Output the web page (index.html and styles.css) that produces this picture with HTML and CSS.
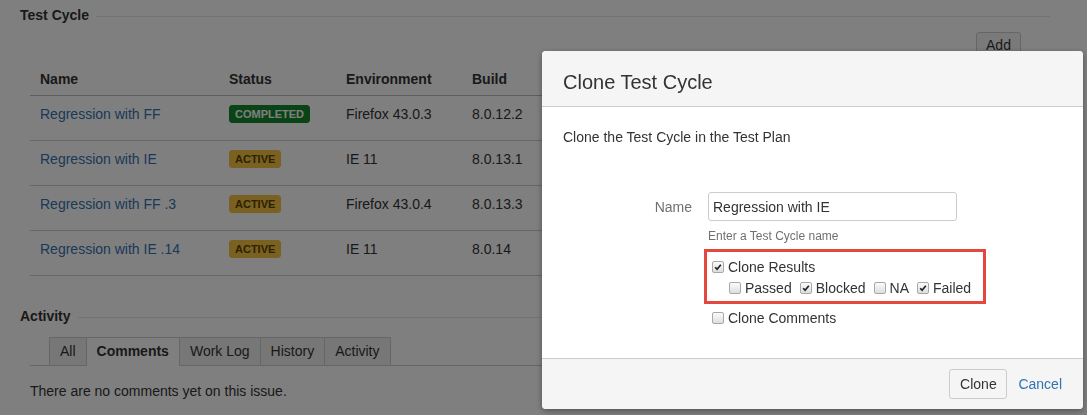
FILE: index.html
```html
<!DOCTYPE html>
<html lang="en">
  <head>
    <meta charset="utf-8" />
    <title>Clone Test Cycle</title>
    <link rel="stylesheet" href="styles.css">
  </head>
  <body>
    <div class="page">
      <div class="section-head">
        <h3>Test Cycle</h3>
        <span class="rule"></span>
      </div>

      <div class="cycles">
        <div class="toolbar">
          <button class="btn">Add</button>
        </div>
        <table class="cycle-table">
          <thead>
            <tr>
              <th class="col-name">Name</th>
              <th class="col-status">Status</th>
              <th class="col-env">Environment</th>
              <th>Build</th>
            </tr>
          </thead>
          <tbody>
            <tr>
              <td><a href="#">Regression with FF</a></td>
              <td><span class="lozenge done">Completed</span></td>
              <td>Firefox 43.0.3</td>
              <td>8.0.12.2</td>
            </tr>
            <tr>
              <td><a href="#">Regression with IE</a></td>
              <td><span class="lozenge active">Active</span></td>
              <td>IE 11</td>
              <td>8.0.13.1</td>
            </tr>
            <tr>
              <td><a href="#">Regression with FF .3</a></td>
              <td><span class="lozenge active">Active</span></td>
              <td>Firefox 43.0.4</td>
              <td>8.0.13.3</td>
            </tr>
            <tr>
              <td><a href="#">Regression with IE .14</a></td>
              <td><span class="lozenge active">Active</span></td>
              <td>IE 11</td>
              <td>8.0.14</td>
            </tr>
          </tbody>
        </table>
      </div>

      <div class="section-head activity-head">
        <h3>Activity</h3>
        <span class="rule"></span>
      </div>

      <div class="activity">
        <ul class="tabs">
          <li class="tab">All</li>
          <li class="tab current">Comments</li>
          <li class="tab">Work Log</li>
          <li class="tab">History</li>
          <li class="tab">Activity</li>
        </ul>
        <p class="empty">There are no comments yet on this issue.</p>
      </div>
    </div>

    <div class="blanket"></div>

    <div class="dialog">
      <div class="dialog-header">
        <h2>Clone Test Cycle</h2>
      </div>
      <div class="dialog-body">
        <p>Clone the Test Cycle in the Test Plan</p>

        <div class="field">
          <label class="field-label" for="cycle-name">Name</label>
          <div class="field-value">
            <input id="cycle-name" class="text" type="text" value="Regression with IE" />
            <div class="hint">Enter a Test Cycle name</div>

            <div class="highlight">
              <label class="check">
                <span class="box on"><svg viewBox="0 0 12 12"><path d="M2.6 6.3 L4.9 8.6 L9.4 3.2" /></svg></span>
                Clone Results
              </label>
              <div class="sub-checks">
                <label class="check">
                  <span class="box"></span>
                  Passed
                </label>
                <label class="check">
                  <span class="box on"><svg viewBox="0 0 12 12"><path d="M2.6 6.3 L4.9 8.6 L9.4 3.2" /></svg></span>
                  Blocked
                </label>
                <label class="check">
                  <span class="box"></span>
                  NA
                </label>
                <label class="check">
                  <span class="box on"><svg viewBox="0 0 12 12"><path d="M2.6 6.3 L4.9 8.6 L9.4 3.2" /></svg></span>
                  Failed
                </label>
              </div>
            </div>

            <label class="check comments">
              <span class="box"></span>
              Clone Comments
            </label>
          </div>
        </div>
      </div>
      <div class="dialog-footer">
        <button class="btn">Clone</button>
        <a href="#" class="cancel">Cancel</a>
      </div>
    </div>
  </body>
</html>
```

FILE: styles.css
```css
/* Global */
body {
  margin: 0;
  font-family: "Liberation Sans", Arial, sans-serif;
  font-size: 14px;
  line-height: 20px;
  color: #333;
  background: #fff;
}

a {
  color: #3572b0;
  text-decoration: none;
}

.btn {
  font-family: inherit;
  font-size: 14px;
  color: #333;
  background: #f5f5f5;
  border: 1px solid #ccc;
  border-radius: 3px;
  padding: 0 10px;
  height: 30px;
}

/* Page behind the dialog */
.page {
  padding: 5px 37px 0 20px;
}

.section-head {
  display: flex;
  align-items: center;
  gap: 7px;
}

.section-head h3 {
  margin: 0;
  font-size: 14px;
  font-weight: bold;
}

.section-head .rule {
  flex: 1;
  border-top: 1px solid #e6e6e6;
  margin-top: 2px;
}

.cycles {
  padding: 0 29px 0 10px;
}

.toolbar {
  display: flex;
  justify-content: flex-end;
  margin-top: 7px;
}

.toolbar .btn {
  height: 26px;
  width: 45px;
  padding: 0;
}

.cycle-table {
  width: 100%;
  border-collapse: collapse;
  margin-top: 4px;
}

.cycle-table th {
  text-align: left;
  font-weight: bold;
  padding: 7px 10px 6px;
  border-bottom: 1px solid #bbb;
}

.cycle-table .col-name { width: 169px; }
.cycle-table .col-status { width: 97px; }
.cycle-table .col-env { width: 106px; }

.cycle-table td {
  padding: 8px 10px 16px;
  vertical-align: top;
  border-bottom: 1px solid #ccc;
}

.lozenge {
  display: inline-block;
  font-size: 11px;
  font-weight: bold;
  line-height: 12px;
  text-transform: uppercase;
  padding: 2px 5px;
  border: 1px solid transparent;
  border-radius: 3px;
  vertical-align: 1px;
}

.lozenge.done {
  background: #14892c;
  border-color: #14892c;
  color: #fff;
}

.lozenge.active {
  background: #f6c342;
  border-color: #f6c342;
  color: #594300;
}

/* Activity */
.activity-head {
  margin-top: 30px;
}

.activity {
  padding-left: 10px;
}

.tabs {
  list-style: none;
  margin: 11px 0 0;
  padding: 0 0 0 19px;
  display: flex;
  border-bottom: 1px solid #ccc;
}

.tab {
  padding: 3px 10px 4px;
  border: 1px solid #ccc;
  border-bottom: none;
  background: #eee;
  margin-right: -1px;
}

.tab.current {
  background: #fff;
  font-weight: bold;
  margin-bottom: -1px;
  padding-bottom: 5px;
}

.empty {
  margin: 15px 0 0;
}

/* Blanket */
.blanket {
  position: fixed;
  inset: 0;
  background: rgba(0, 0, 0, 0.5);
}

/* Dialog */
.dialog {
  position: fixed;
  left: 542px;
  top: 51px;
  width: 541px;
  background: #fff;
  border-radius: 4px;
  overflow: hidden;
  box-shadow: 0 2px 6px rgba(0, 0, 0, 0.35);
}

.dialog-header {
  background: #f5f5f5;
  border-bottom: 1px solid #ccc;
  padding: 21px 21px 14px;
}

.dialog-header h2 {
  margin: 0;
  font-size: 20px;
  font-weight: normal;
  line-height: 20px;
}

.dialog-body {
  padding: 20px 21px 29px;
}

.dialog-body p {
  margin: 0;
}

.field {
  display: flex;
  gap: 16px;
  margin-top: 45px;
}

.field-label {
  width: 129px;
  text-align: right;
  color: #707070;
  padding-top: 5px;
}

.text {
  box-sizing: border-box;
  width: 249px;
  height: 29px;
  padding: 0 4px;
  border: 1px solid #ccc;
  border-radius: 3px;
  font-family: inherit;
  font-size: 14px;
  color: #333;
  display: block;
}

.hint {
  font-size: 12px;
  line-height: 16px;
  color: #707070;
  margin-top: 7px;
}

.highlight {
  box-sizing: border-box;
  width: 282px;
  margin: 5px 0 0 -4px;
  padding: 5px 0 3px 5px;
  border: 3px solid #e4473e;
}

.check {
  display: inline-flex;
  align-items: center;
  gap: 4px;
  color: #333;
}

.sub-checks {
  display: flex;
  gap: 8px;
  margin: 1px 0 0 17px;
}

.check.comments {
  margin: 4px 0 0 4px;
}

.box {
  box-sizing: border-box;
  width: 12px;
  height: 12px;
  border: 1px solid #a8a8a8;
  border-radius: 2px;
  background: linear-gradient(#fbfbfb, #dedede);
  display: inline-flex;
}

.box svg {
  width: 10px;
  height: 10px;
}

.box path {
  fill: none;
  stroke: #222;
  stroke-width: 2;
}

.dialog-footer {
  background: #f5f5f5;
  border-top: 1px solid #ccc;
  padding: 10px 21px 10px;
  display: flex;
  justify-content: flex-end;
  align-items: center;
  gap: 11px;
}

.dialog-footer .btn {
  width: 58px;
  padding: 0;
}
```
